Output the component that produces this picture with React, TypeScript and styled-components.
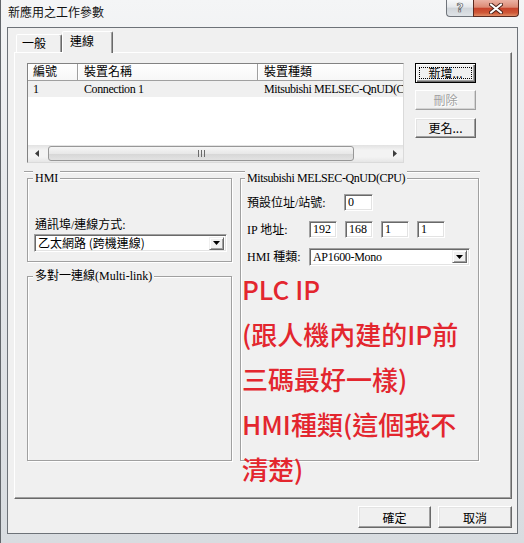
import React from "react";
import styled, { createGlobalStyle } from "styled-components";

const SERIF = `"Liberation Serif", "Noto Sans CJK TC", serif`;
const SANS = `"Noto Sans CJK TC", "Liberation Sans", sans-serif`;

const GlobalStyle = createGlobalStyle`
  * { box-sizing: border-box; }
  html, body { margin: 0; padding: 0; background: #ffffff; }
  body { font-family: ${SERIF}; font-size: 12px; color: #000; }
`;

const annotation = [
  "PLC IP",
  "(跟人機內建的IP前",
  "三碼最好一樣)",
  "HMI種類(這個我不",
  "清楚)"
];

function DownArrow() {
  return (
    <svg width="7" height="4" viewBox="0 0 7 4">
      <polygon points="0,0 7,0 3.5,4" fill="#000" />
    </svg>
  );
}

function Combo({ width, text, sans }: { width: number; text: string; sans?: boolean }) {
  return (
    <ComboBox $w={width}>
      <ComboText $sans={sans}>{text}</ComboText>
      <ComboArrow>
        <DownArrow />
      </ComboArrow>
    </ComboBox>
  );
}

function App() {
  return (
    <>
      <GlobalStyle />
      <Window>
        <TitleBar>
          <Caption>新應用之工作參數</Caption>
          <CaptionButtons>
            <HelpButton>?</HelpButton>
            <CloseButton>
              <svg width="14" height="11" viewBox="0 0 14 11">
                <path d="M2 1.5 L12 9.5 M12 1.5 L2 9.5" stroke="#4a2119" strokeWidth="4" strokeLinecap="round" />
                <path d="M2 1.5 L12 9.5 M12 1.5 L2 9.5" stroke="#fff" strokeWidth="2.2" strokeLinecap="round" />
              </svg>
            </CloseButton>
          </CaptionButtons>
        </TitleBar>

        <Client>
          <TabStrip>
            <Tab $w={46}>一般</Tab>
            <Tab $w={51} $active>連線</Tab>
          </TabStrip>

          <TabPanel>
            <TopRow>
              <ListView>
                <ListHeader>
                  <HeaderCell $w={50}>編號</HeaderCell>
                  <HeaderCell $w={180}>裝置名稱</HeaderCell>
                  <HeaderCell $w={160}>裝置種類</HeaderCell>
                </ListHeader>
                <ListRow>
                  <RowCell $w={50}>1</RowCell>
                  <RowCell $w={180}>Connection 1</RowCell>
                  <RowCell $w={160}>Mitsubishi MELSEC-QnUD(CPU)</RowCell>
                </ListRow>
                <ListBody />
                <HScroll>
                  <ScrollArrow>
                    <svg width="4" height="7" viewBox="0 0 4 7">
                      <polygon points="4,0 4,7 0,3.5" fill="#3c3c3c" />
                    </svg>
                  </ScrollArrow>
                  <ScrollTrack>
                    <ScrollThumb>
                      <svg width="7" height="7" viewBox="0 0 7 7">
                        <path d="M0.5 0 V7 M3.5 0 V7 M6.5 0 V7" stroke="#6b6b6b" strokeWidth="1" />
                      </svg>
                    </ScrollThumb>
                  </ScrollTrack>
                  <ScrollArrow>
                    <svg width="4" height="7" viewBox="0 0 4 7">
                      <polygon points="0,0 0,7 4,3.5" fill="#3c3c3c" />
                    </svg>
                  </ScrollArrow>
                </HScroll>
              </ListView>

              <ButtonColumn>
                <PushButton $w={61} $h={20} $default>
                  <Focus $on>新增...</Focus>
                </PushButton>
                <PushButton $w={61} $h={20} disabled>
                  <Focus>刪除</Focus>
                </PushButton>
                <PushButton $w={61} $h={20}>
                  <Focus>更名...</Focus>
                </PushButton>
              </ButtonColumn>
            </TopRow>

            <Separator />

            <GroupsRow>
              <LeftColumn>
                <Group $w={205} $h={84}>
                  <GroupTitle>HMI</GroupTitle>
                  <GroupLabel>通訊埠/連線方式:</GroupLabel>
                  <ComboSlot>
                    <Combo width={193} text="乙太網路 (跨機連線)" sans />
                  </ComboSlot>
                </Group>
                <Group $w={205} $h={185}>
                  <GroupTitle>多對一連線(Multi-link)</GroupTitle>
                </Group>
              </LeftColumn>

              <Group $w={239} $h={283}>
                <GroupTitle $left={4} $tight>Mitsubishi MELSEC-QnUD(CPU)</GroupTitle>
                <Fields>
                  <FieldRow>
                    <FieldLabel $w={97}>預設位址/站號:</FieldLabel>
                    <TextBox $w={29}>0</TextBox>
                  </FieldRow>
                  <FieldRow>
                    <FieldLabel $w={62}>IP 地址:</FieldLabel>
                    <IpGroup>
                      <TextBox $w={28}>192</TextBox>
                      <TextBox $w={28}>168</TextBox>
                      <TextBox $w={28}>1</TextBox>
                      <TextBox $w={28}>1</TextBox>
                    </IpGroup>
                  </FieldRow>
                  <FieldRow>
                    <FieldLabel $w={62}>HMI 種類:</FieldLabel>
                    <Combo width={161} text="AP1600-Mono" />
                  </FieldRow>
                </Fields>
              </Group>
            </GroupsRow>
          </TabPanel>

          <Footer>
            <DialogButton $w={73}>確定</DialogButton>
            <DialogButton $w={74}>取消</DialogButton>
          </Footer>
        </Client>

        <Annotation>
          {annotation.map(line => (
            <AnnotationLine key={line}>{line}</AnnotationLine>
          ))}
        </Annotation>
      </Window>
    </>
  );
}

const Window = styled.div`
  position: relative;
  width: 524px;
  height: 543px;
  display: flex;
  flex-direction: column;
  background: linear-gradient(180deg, #f4f5f6 0%, #e6e8eb 35%, #d8dce0 100%);
  border-left: 1px solid #62666b;
  overflow: hidden;
`;

const TitleBar = styled.div`
  height: 27px;
  flex: none;
  display: flex;
  align-items: flex-start;
  justify-content: space-between;
  padding: 0 5px 0 7px;
`;

const Caption = styled.span`
  margin-top: 4px;
  font-family: ${SANS};
  font-size: 12px;
  line-height: 16px;
  color: #111;
`;

const CaptionButtons = styled.div`
  display: flex;
`;

const HelpButton = styled.div`
  width: 27px;
  height: 17px;
  border: 1px solid #6f747b;
  border-top: none;
  border-right: none;
  border-radius: 0 0 0 4px;
  background: linear-gradient(180deg, #f7f8f9 0%, #e4e7ea 45%, #cfd4d9 50%, #dfe3e7 100%);
  display: flex;
  align-items: center;
  justify-content: center;
  font-family: "DejaVu Sans", sans-serif;
  font-size: 12px;
  font-weight: bold;
  color: #fdfdfd;
  -webkit-text-stroke: 0.7px #5a5d61;
`;

const CloseButton = styled.div`
  width: 46px;
  height: 17px;
  border: 1px solid #5b2a20;
  border-top: none;
  border-radius: 0 0 4px 0;
  background: linear-gradient(180deg, #ebb2a4 0%, #dc8a74 45%, #c7432b 52%, #cf5837 80%, #e08d68 100%);
  display: flex;
  align-items: center;
  justify-content: center;
`;

const Client = styled.div`
  flex: 1;
  margin: 0 6px 9px 6px;
  border: 1px solid #6d7278;
  background: #f0f0f0;
  display: flex;
  flex-direction: column;
`;

const TabStrip = styled.div`
  height: 24px;
  flex: none;
  display: flex;
  align-items: flex-end;
  padding-left: 8px;
  position: relative;
  z-index: 1;
`;

const Tab = styled.div<{ $w: number; $active?: boolean }>`
  width: ${p => p.$w}px;
  height: ${p => (p.$active ? 22 : 18)}px;
  margin-bottom: ${p => (p.$active ? -1 : 0)}px;
  border: 1px solid;
  border-bottom: none;
  border-color: #ffffff #696969 transparent #ffffff;
  border-radius: 2px 2px 0 0;
  box-shadow: inset -1px 0 0 #a0a0a0;
  background: #f0f0f0;
  padding: ${p => (p.$active ? "1px 0 0 7px" : "0 0 0 5px")};
  font-family: ${SANS};
  font-size: 12px;
  line-height: 16px;
`;

const TabPanel = styled.div`
  flex: 1;
  margin: 0 5px 0 6px;
  border: 1px solid;
  border-color: #ffffff #696969 #696969 #ffffff;
  box-shadow: inset -1px -1px 0 #a0a0a0;
  padding: 10px 0 0 12px;
`;

const TopRow = styled.div`
  display: flex;
  align-items: flex-start;
  gap: 11px;
`;

const ListView = styled.div`
  width: 377px;
  height: 100px;
  border: 1px solid;
  border-color: #828282 #dadada #dadada #828282;
  background: #fff;
  display: flex;
  flex-direction: column;
  overflow: hidden;
`;

const ListHeader = styled.div`
  height: 17px;
  flex: none;
  display: flex;
  white-space: nowrap;
`;

const HeaderCell = styled.div<{ $w: number }>`
  width: ${p => p.$w}px;
  flex: none;
  border-right: 1px solid #a0a0a0;
  border-bottom: 1px solid #a0a0a0;
  box-shadow: inset 1px 1px 0 #fff;
  background: linear-gradient(180deg, #ffffff, #f7f7f7);
  padding-left: 5px;
  line-height: 16px;
  overflow: hidden;
  & + & {
    padding-left: 6px;
  }
`;

const ListRow = styled.div`
  height: 16px;
  flex: none;
  display: flex;
  background: #f0f0f0;
  white-space: nowrap;
`;

const RowCell = styled.div<{ $w: number }>`
  width: ${p => p.$w}px;
  flex: none;
  padding-left: 5px;
  line-height: 16px;
  letter-spacing: -0.4px;
  overflow: hidden;
  & + & {
    padding-left: 6px;
  }
`;

const ListBody = styled.div`
  flex: 1;
`;

const HScroll = styled.div`
  height: 17px;
  flex: none;
  display: flex;
  background: linear-gradient(180deg, #e2e2e2 0%, #f3f3f3 30%, #f3f3f3 70%, #e6e6e6 100%);
`;

const ScrollArrow = styled.div`
  width: 17px;
  flex: none;
  display: flex;
  align-items: center;
  justify-content: center;
`;

const ScrollTrack = styled.div`
  flex: 1;
  display: flex;
  align-items: center;
  padding-left: 3px;
`;

const ScrollThumb = styled.div`
  width: 306px;
  height: 15px;
  border: 1px solid #979797;
  border-radius: 3px;
  background: linear-gradient(180deg, #f6f6f6 0%, #e8e8e8 50%, #d6d6d6 51%, #e2e2e2 100%);
  display: flex;
  align-items: center;
  justify-content: center;
`;

const ButtonColumn = styled.div`
  display: flex;
  flex-direction: column;
  gap: 7px;
  & > :last-child {
    margin-top: 1px;
  }
`;

const PushButton = styled.button<{ $w: number; $h: number; $default?: boolean }>`
  width: ${p => p.$w}px;
  height: ${p => p.$h}px;
  display: flex;
  padding: 3px;
  margin: 0;
  background: #f0f0f0;
  border: 1px solid;
  border-color: ${p => (p.$default ? "#000" : "#fff #696969 #696969 #fff")};
  box-shadow: ${p =>
    p.$default
      ? "inset 1px 1px 0 #fff, inset -1px -1px 0 #696969, inset -2px -2px 0 #a0a0a0"
      : "inset -1px -1px 0 #a0a0a0, inset 1px 1px 0 #e3e3e3"};
  font-family: ${SANS};
  font-size: 12px;
  color: #000;
  &:disabled {
    color: #a0a0a0;
    text-shadow: 1px 1px 0 #fff;
    border-color: #fff #a0a0a0 #a0a0a0 #fff;
    box-shadow: inset -1px -1px 0 #d4d4d4;
  }
`;

const Focus = styled.span<{ $on?: boolean }>`
  flex: 1;
  display: flex;
  align-items: center;
  justify-content: center;
  border: 1px dotted ${p => (p.$on ? "#000" : "transparent")};
  line-height: 12px;
`;

const Separator = styled.div`
  width: 456px;
  height: 2px;
  margin: 8px 0 0 -3px;
  border-top: 1px solid #a0a0a0;
  border-bottom: 1px solid #fff;
`;

const GroupsRow = styled.div`
  display: flex;
  align-items: flex-start;
  gap: 8px;
  margin-top: 5px;
`;

const LeftColumn = styled.div`
  display: flex;
  flex-direction: column;
  gap: 14px;
`;

const Group = styled.div<{ $w: number; $h: number }>`
  width: ${p => p.$w}px;
  height: ${p => p.$h}px;
  border: 1px solid #a0a0a0;
  box-shadow: 1px 1px 0 #fff, inset 1px 1px 0 #fff;
`;

const GroupTitle = styled.div<{ $left?: number; $tight?: boolean }>`
  width: fit-content;
  height: 14px;
  margin: -8px 0 0 ${p => p.$left ?? 5}px;
  padding: 0 2px;
  background: #f0f0f0;
  line-height: 14px;
  letter-spacing: ${p => (p.$tight ? "-0.4px" : "0")};
  white-space: nowrap;
`;

const GroupLabel = styled.div`
  margin: 34px 0 0 7px;
  line-height: 13px;
`;

const ComboSlot = styled.div`
  margin: 2px 0 0 6px;
`;

const ComboBox = styled.div<{ $w: number }>`
  width: ${p => p.$w}px;
  height: 18px;
  display: flex;
  align-items: center;
  background: #fff;
  border: 1px solid;
  border-color: #a0a0a0 #fff #fff #a0a0a0;
  box-shadow: inset 1px 1px 0 #696969, inset -1px -1px 0 #e3e3e3;
  padding: 0 2px 0 3px;
`;

const ComboText = styled.span<{ $sans?: boolean }>`
  flex: 1;
  font-family: ${p => (p.$sans ? SANS : SERIF)};
  font-size: 12px;
  line-height: 14px;
  letter-spacing: ${p => (p.$sans ? "0" : "-0.3px")};
  white-space: nowrap;
`;

const ComboArrow = styled.div`
  width: 15px;
  height: 13px;
  display: flex;
  align-items: center;
  justify-content: center;
  background: #f0f0f0;
  border: 1px solid;
  border-color: #f0f0f0 #696969 #696969 #f0f0f0;
  box-shadow: inset 1px 1px 0 #fff, inset -1px -1px 0 #a0a0a0;
`;

const Fields = styled.div`
  display: flex;
  flex-direction: column;
  gap: 10px;
  margin: 9px 0 0 6px;
`;

const FieldRow = styled.div`
  height: 17px;
  display: flex;
  align-items: center;
`;

const FieldLabel = styled.span<{ $w: number }>`
  width: ${p => p.$w}px;
  flex: none;
  line-height: 14px;
  white-space: nowrap;
`;

const IpGroup = styled.div`
  display: flex;
  gap: 8px;
`;

const TextBox = styled.div<{ $w: number }>`
  width: ${p => p.$w}px;
  height: 17px;
  background: #fff;
  border: 1px solid;
  border-color: #a0a0a0 #fff #fff #a0a0a0;
  box-shadow: inset 1px 1px 0 #696969, inset -1px -1px 0 #e3e3e3;
  padding-left: 3px;
  line-height: 15px;
`;

const Footer = styled.div`
  height: 34px;
  flex: none;
  display: flex;
  justify-content: flex-end;
  align-items: flex-start;
  gap: 7px;
  padding: 7px 5px 0 0;
`;

const DialogButton = styled.button<{ $w: number }>`
  width: ${p => p.$w}px;
  height: 22px;
  margin: 0;
  padding: 0;
  background: #f0f0f0;
  border: 1px solid;
  border-color: #fff #696969 #696969 #fff;
  box-shadow: inset -1px -1px 0 #a0a0a0, inset 1px 1px 0 #e3e3e3;
  font-family: ${SANS};
  font-size: 12px;
  color: #000;
`;

const Annotation = styled.div`
  position: absolute;
  left: 241px;
  top: 266px;
  font-family: ${SANS};
  font-size: 26px;
  font-weight: 500;
  line-height: 45px;
  color: #e3262e;
  white-space: nowrap;
  pointer-events: none;
`;

const AnnotationLine = styled.div``;

export default App;
